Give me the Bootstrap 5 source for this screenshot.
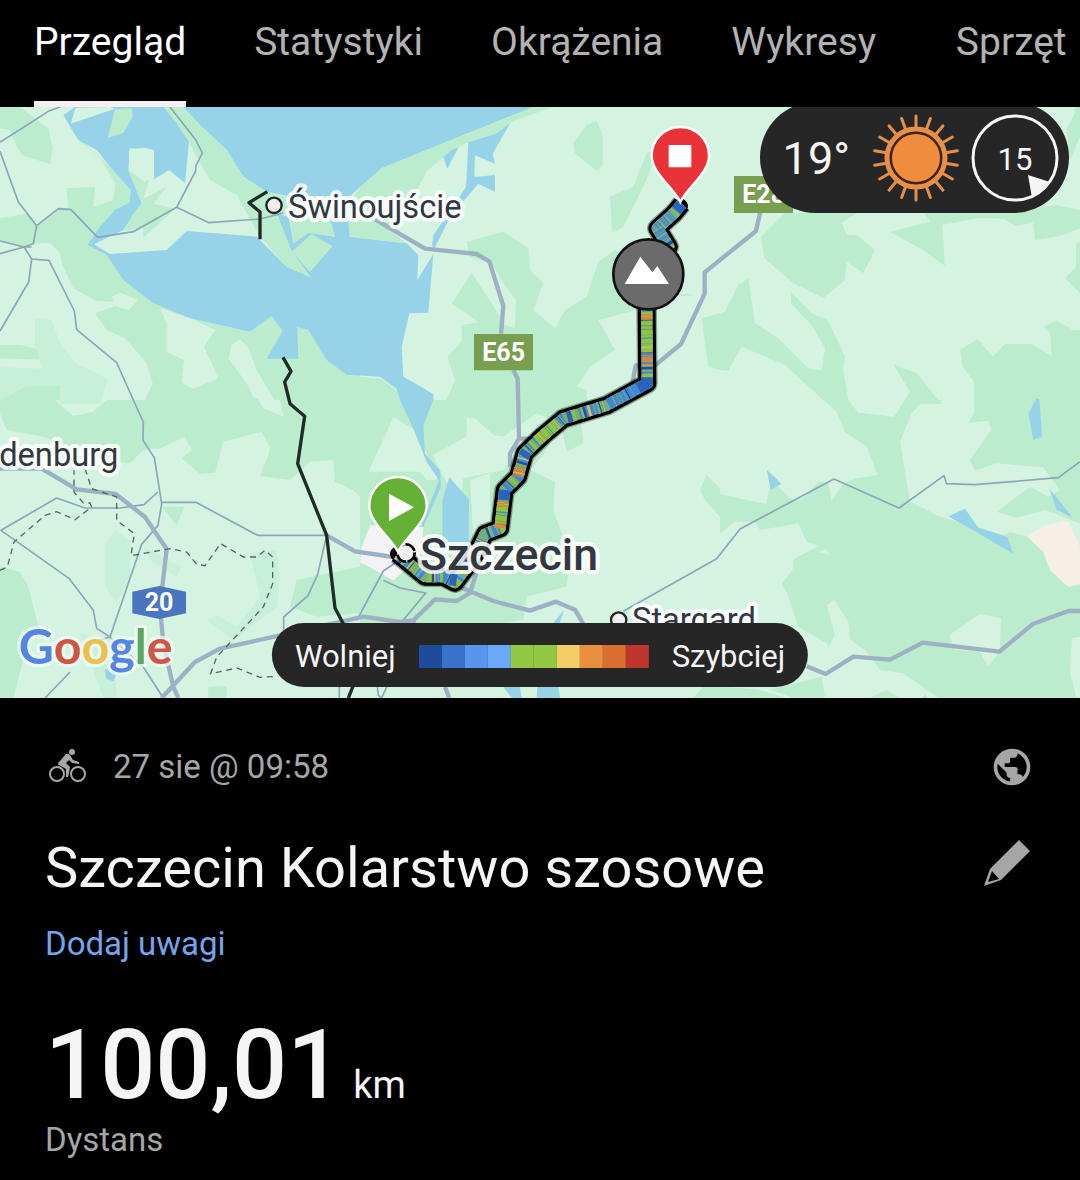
<!DOCTYPE html>
<html lang="pl">
<head>
<meta charset="utf-8">
<meta name="viewport" content="width=device-width, initial-scale=1">
<title>Szczecin Kolarstwo szosowe</title>
<link href="https://cdn.jsdelivr.net/npm/bootstrap@5.3.0/dist/css/bootstrap.min.css" rel="stylesheet">
<style>
  body { background: #000; color: #f5f5f5; font-family: Roboto, "Noto Sans", sans-serif; overflow-x: hidden; }
  .tabs-bar { overflow-x: auto; scrollbar-width: none; height: 107px; }
  .tabs-bar::-webkit-scrollbar { display: none; }
  .tab-item { padding: 0 34px; min-width: 202px; }
  .tab-item .nav-link { padding: 18px 0 0; height: 107px; color: #b2b2b2; font-size: 39px; line-height: 48px; white-space: nowrap; text-align: center; border-bottom: 6px solid transparent; }
  .tab-item .nav-link.active { color: #fff; border-bottom-color: #f5eff3; }
  .map-area { aspect-ratio: 1080 / 591; background: #d5f3e1; }
  .map-area > svg { width: 100%; height: 100%; }
  .map-area text { font-family: Roboto, "Noto Sans", sans-serif; }
  .map-area .provider { font-family: Lato, sans-serif; font-size: 145px; font-weight: 700; paint-order: stroke; }
  .town { fill: #33373f; stroke: #fff; stroke-opacity: .85; stroke-width: 24px; stroke-linejoin: round; paint-order: stroke; }
  .shield { fill: #fff; font-weight: 700; text-anchor: middle; font-size: 75px; }
  .weather { top: -5px; right: 11px; height: 111px; background: #262626; padding: 2px 10px 0 23px; }
  .temp { font-size: 45px; line-height: 54px; margin-right: 21px; }
  .wind { margin-left: 10px; }
  .speed-key { bottom: 11px; left: 50%; transform: translateX(-50%); height: 64px; padding: 3px 23px 0; gap: 23px; background: #262626; font-size: 31px; line-height: 36px; }
  .swatch { width: 23px; height: 23px; }
  .details { padding: 45px 46px 0 45px; }
  .meta { color: #a6a6a6; font-size: 33px; line-height: 48px; }
  .title-row { margin-top: 43px; }
  .ride-title { font-size: 56px; line-height: 68px; font-weight: 400; }
  .note-link { color: #74a5ea; font-size: 33px; line-height: 44px; margin-top: 20px; }
  .distance { font-size: 97px; line-height: 102px; font-weight: 500; }
  .distance-row { gap: 11px; margin-top: 48px; }
  .unit { font-size: 38px; line-height: 44px; }
  .icon-btn { color: #a6a6a6; line-height: 0; }
  .edit-btn { margin-bottom: 8px; }
</style>
<script src="https://cdn.jsdelivr.net/npm/bootstrap@5.3.0/dist/js/bootstrap.bundle.min.js"></script>
</head>
<body>
<nav class="tabs-bar" aria-label="Aktywność">
  <ul class="nav flex-nowrap">
    <li class="nav-item tab-item flex-shrink-0"><a class="nav-link active" aria-current="page" href="#">Przegląd</a></li>
    <li class="nav-item tab-item flex-shrink-0"><a class="nav-link" href="#">Statystyki</a></li>
    <li class="nav-item tab-item flex-shrink-0"><a class="nav-link" href="#">Okrążenia</a></li>
    <li class="nav-item tab-item flex-shrink-0"><a class="nav-link" href="#">Wykresy</a></li>
    <li class="nav-item tab-item flex-shrink-0"><a class="nav-link" href="#">Sprzęt</a></li>
  </ul>
</nav>

<main>
<section class="map-area position-relative overflow-hidden">
<svg class="d-block" viewBox="0 0 3240 1773" preserveAspectRatio="xMidYMid slice" role="img" aria-label="Mapa trasy">
  <defs>
    <path id="track" d="M965-588L942-560L892-515L926-460L860-380V-260L862-50L740 16L610 56L550 106L494 160L474 230L434 270L420 385L375 402L340 475L285 548L250 530H195L135 480L112 462"/>
    <path id="pin" d="M0 0C-20-42-86-88-86-139A86 86 0 0 1 86-139C86-88 20-42 0 0Z"/>
  </defs>
  <rect width="3240" height="1773" fill="#d5f3e1"/>
  <!-- forests -->
  <g fill="#bbeccd">
    <g transform="translate(0 -21)">
      <path d="M0 21H60L145 85L158 145L150 193L65 165L40 118L30 90L0 85Z"/>
      <path d="M195 60L235 115L330 200L392 270L388 312L300 400L265 435L320 465L370 540L460 610L570 655L750 695L815 648L1080 640V900H435L458 850L440 790L375 715L320 690L285 640L345 618L385 630L415 600L360 578L335 590L340 605L290 603L220 565L185 490L180 460L150 428L110 430L72 442L0 425V355L85 340L110 375L175 325L205 325L200 265L285 260L280 322L340 300L345 250L300 175L235 120Z"/>
      <path d="M0 735L60 735L150 757V780L0 775ZM0 870L80 858L180 855V900H0Z"/>
    </g>
    <g transform="translate(1080 -21)">
      <path d="M680 75L710 62L728 105V195L710 213L645 160L640 130ZM750 290L820 260L860 160L880 150L870 215L830 300L790 380L757 398Z"/>
      <path d="M320 425L430 395L505 445L510 510L550 550L520 630L585 685L615 630L680 590L715 485L765 450L940 580L1005 586L940 590L830 630L715 660L765 750L690 800L650 860L680 870V930L600 960L560 1050L400 1250L200 1250L260 900L285 840L262 770L305 725V675L355 668L320 640L275 612L335 518L395 610L435 675L465 685L468 600L430 550L395 490L330 470Z"/>
      <path d="M1025 655L1080 640V810L1045 800Z"/>
      <path d="M0 830L60 835L110 870L220 900V1250H0Z"/>
    </g>
    <g transform="translate(2160 -21)">
      <path d="M195 338H610L630 365L510 396L610 450L675 498L667 375L780 353L850 356L890 378L940 368L945 420L1020 408L1080 385V330L1010 315L860 338H412L365 368L380 405H410L465 450L430 520L380 485L375 540L310 594L220 550L133 475L123 410Z"/>
      <path d="M0 640L15 635L55 555L85 535L105 670L175 715L265 805L305 812L315 745L275 675L213 610V577L275 640L323 660L375 770L370 810L385 900L420 980H400L310 900L195 795L65 740L25 812L0 810Z"/>
      <path d="M520 793L590 820L655 900L555 900L570 875ZM720 750L773 717L818 770L855 732H935L995 768L990 700L970 680L1010 662L1060 690L1080 690V960H762V845L728 800ZM1035 535L1068 500V430L1080 425V580ZM1040 85L1065 40V21H1080V110L1050 180Z"/>
    </g>
    <g transform="translate(0 879)">
      <path d="M0 0H1080V290L1060 270L1005 245L1000 180L930 185L870 240L780 228L805 165L810 140L785 95L670 125L645 218L600 222L545 175L575 150L555 110L480 145L430 150L390 190L350 185L280 170L130 110L20 90L0 40Z"/>
      <path d="M0 500L60 515L85 560L100 620L115 680L70 780L40 893H0ZM485 320H553L530 375ZM625 860L680 858V893H625ZM890 540L1080 500V640L950 650L870 620Z"/>
    </g>
    <g transform="translate(1080 879)">
      <path d="M0 0H820L660 40L670 130L620 155L600 60L500 180L510 210L585 245L580 330L605 400L630 480L620 560L500 590L490 660L200 700H0Z"/>
      <path d="M1020 270L1040 225L1080 265V350L1035 300ZM1000 893L1030 860H1080V893Z"/>
    </g>
    <g transform="translate(2160 879)">
      <path d="M315 0L350 35L375 95L440 140L473 225L410 235L370 250L335 303L325 245L295 245L245 300L213 298L155 240L138 312L80 300L0 282V400L45 365L105 365L120 390L235 370L260 425L297 438L220 478L218 510L187 550L205 590L235 680L320 730L325 742L345 705L320 615L343 600L385 665L390 718L440 755L480 810L550 820L655 893H1080V500L1045 360L920 410L870 395L850 405L770 380L660 350L570 305L540 125L575 40L600 12H665L660 0H555L522 50L415 38L385 0Z"/>
      <path d="M765 0V35L745 68L805 62L813 90L750 180L765 212L830 190L970 202L1020 270L985 290L930 260L830 335L890 353L975 330L1080 370V0H950L930 45L900 48L845 35L820 0ZM150 870L305 830L315 893L220 893ZM450 893L500 870L540 893ZM0 860L110 868L200 893H0Z"/>
    </g>
  </g>
  <!-- clearings -->
  <g fill="#d5f3e1">
    <g transform="translate(0 -21)">
      <path d="M480 625L580 658L645 690L612 740L655 835L580 867L545 848L552 780L500 755V670ZM695 735L720 718L743 740L770 810L850 945L760 890L740 850L685 775Z"/>
      <path d="M590 170L630 240L710 285L740 340L780 385L790 412L560 393L500 450L330 462L280 435L400 395L530 325Z"/>
    </g>
    <g transform="translate(0 879)"><path d="M165 0H320L280 35L220 48ZM775 0H840L850 50L790 25Z"/></g>
    <g transform="translate(1080 879)">
      <path d="M25 215L100 52L165 90L205 170L240 215L230 240L200 240L180 215ZM320 55L345 55L400 105L430 110L530 40L590 65L470 165L430 210L310 235L300 330L245 220L218 165L320 110ZM330 240L390 220V370L340 420Z"/>
      <path d="M500 590L620 590L680 680H490Z"/>
    </g>
    <g transform="translate(2160 879)"><path d="M688 705L780 642L843 655L840 755L803 800L780 755L705 750ZM1055 715L1080 710V893H1070L1050 820ZM295 457L318 447L330 465Z"/></g>
  </g>
  <g fill="#c8f0d8">
    <path d="M105 635L155 638L180 710L230 770L325 815L300 890H180V835L80 838L20 870L0 880V780L125 785L105 710Z"/>
    <path d="M315 1310L345 1270L390 1300V1420L350 1485L315 1440ZM750 1340L830 1330L840 1420L830 1500L700 1600L620 1540L650 1525L710 1560L780 1470ZM430 1320L545 1380L530 1410L450 1360ZM240 1580L340 1590L350 1773H310Z"/>
  </g>
  <!-- water -->
  <g fill="#97d3e8">
    <path d="M190 24L225 0H495L530 49L567 104L555 229L508 189L462 217V129L390 124L385 189L425 289L370 369L282 412L330 441L500 429L560 372L770 389L860 479L930 509L875 434L830 319L866 329L880 409L925 377L1005 389L980 329L1045 339L1050 389L1220 409L1255 444L1252 519L1300 441L1285 617L1228 619L1205 719L1210 809L1245 829L1300 862V879L1270 955L1275 1040L1320 1090L1323 1140L1265 1270L1258 1270L1317 1120L1280 1065L1240 965L1200 879L1190 845L1140 809L1040 803L980 759L925 669L892 660L895 755H800L848 672L815 627L750 674L570 634L460 589L370 519L320 444L262 414L300 359L345 309L388 287L392 249L330 179L290 129L235 99Z"/>
    <path d="M550 0H1600L1490 44L1330 109L1145 184L1080 241L1050 268H865L800 254L730 209L680 129L600 54Z"/>
    <path d="M1538 36L1478 140L1485 170L1425 145L1423 210L1485 204V255L1435 230L1350 330L1303 425L1296 415L1300 385L1398 240L1405 105L1490 79V45ZM1325 136L1376 120L1342 185ZM1327 1180L1348 1110L1407 1178V1330H1327ZM1662 1545L1692 1510L1675 1560H1660ZM1510 1740H1560L1565 1773H1535ZM1612 1740H1675L1680 1773H1610Z"/>
    <path d="M3085 920L3108 875L3118 875L3126 990L3100 998ZM2300 1088L2345 1130L2312 1149ZM2845 1228L2895 1205L2935 1262L3022 1290L3040 1340L2930 1276ZM3148 1145L3185 1190L3217 1232L3170 1208ZM315 1685L350 1700L340 1723L318 1715ZM2770 1773L2776 1760V1773Z"/>
  </g>
  <g fill="#bbeccd">
    <path d="M345 7L395 4L398 30L370 78L323 93ZM875 434L935 382L998 417L930 495Z"/>
    <path d="M490 0H550L600 54L680 129L730 209L800 254L860 270L866 320L830 319L875 434L930 509L860 479L780 389L740 319L710 264L630 219L590 149L567 104L530 49Z"/>
    <path d="M870 270H1060L1080 241L1145 184L1330 109L1490 44L1600 0H1660L1540 41L1490 79L1405 105L1355 129L1280 194L1240 269L1180 379L1220 409L1080 394L1050 389L1045 339L990 335L1005 389L925 377L880 409L866 329Z"/>
    <path d="M387 190L435 225L448 215L430 275L500 240L460 290L525 305L430 392V362L372 372L400 320L425 289Z"/>
  </g>
  <path fill="#d5f3e1" d="M227 2L330 0L345 5L212 50ZM388 128L430 122L460 128L445 220L387 188Z"/>
  <path fill="#f5efe5" d="M3080 1288L3130 1257L3205 1240L3240 1320V1432L3205 1440L3150 1390L3130 1335Z"/>
  <path fill="#f3f3f5" d="M1110 1255L1270 1260L1260 1350L1180 1420L1080 1365L1085 1320Z"/>
  <!-- secondary roads -->
  <g fill="none" stroke="#8ba6b8" stroke-width="5" stroke-linejoin="round">
    <path d="M0 106L145 13L180 0M0 133L55 285L110 356L175 305L213 308L293 391L400 374L530 301L627 347L780 336L850 318M510 0L587 98L607 138L587 178V192L530 301M110 356L100 410L72 420L95 456L147 460L223 612L230 668L350 767L400 879L430 945L429 1000L463 1052L485 1190L474 1255L425 1312L330 1590L280 1605M95 456L86 525L0 672M0 402L72 420L0 440M72 420H95"/>
    <path d="M485 1186H588L773 1285H980L953 1402L924 1466L851 1530V1600M474 1155L432 1193L360 1203H255L170 1173L3 1270L208 1415L280 1510L290 1564L330 1590L430 1680L486 1767M210 1695L135 1773"/>
    <path d="M1190 1365L1150 1392L1070 1540M1150 1420L1200 1443L1277 1458L1205 1545M1132 1740L1135 1765L1145 1773L1160 1740M1870 1513L2150 1355L2220 1266L2502 1116L2697 1203L2832 1106L2840 1130L2925 1133L3175 1112L3240 1064M1018 1740V1773"/>
  </g>
  <!-- main roads -->
  <g fill="none" stroke="#9db1c5" stroke-width="13" stroke-linejoin="round">
    <path d="M0 1085H125L230 1147L347 1161L435 1230L500 1326L480 1500L490 1610L520 1740L535 1773M485 1773L585 1665L660 1625L840 1585L1090 1529L1200 1545L1240 1540L1305 1477L1370 1482L1410 1458L1430 1395M980 1285L1065 1333L1180 1350M1380 1440L1480 1482L1590 1511L1668 1484L1725 1508L1755 1560M1240 1540L1260 1600M1335 1740L1348 1773"/>
    <path d="M1125 337L1275 425L1430 441L1468 463L1510 597L1503 680M1540 790L1553 815L1557 995L1530 1040V1080M1560 995H1600M1895 840L1907 775H1965L2043 711L2114 560V496L2268 372L2282 310"/>
    <path d="M2420 1678L2477 1701L2560 1649L2670 1658L2768 1607L2998 1634L3100 1550L3205 1512H3240"/>
  </g>
  <g fill="none" stroke="#53685c" stroke-width="4" stroke-dasharray="18 14">
    <path d="M0 1390L22 1380L42 1305L135 1225L170 1214L225 1238L275 1200L270 1188H250L222 1155V1090M255 1085L275 1145L350 1170V1240L403 1280L393 1346L510 1325L560 1335L590 1372L615 1376L662 1310L730 1350H770L795 1330L818 1350V1430L790 1500L650 1650L632 1700L710 1683L780 1711L830 1708"/>
  </g>
  <g fill="none" stroke="#202b28" stroke-width="10" stroke-linejoin="round">
    <path d="M802 254L747 287L780 315V397M849 751L873 793L854 825L870 890L914 928L893 1070L980 1285L1005 1503L1040 1570M1062 1730L1045 1773"/>
  </g>
  <!-- recorded track, coloured by speed -->
  <g transform="translate(1080 879)" fill="none" stroke-linejoin="round">
    <use href="#track" stroke="#000" stroke-opacity=".35" stroke-width="62"/>
    <use href="#track" stroke="#000" stroke-width="54"/>
    <path stroke="#000" stroke-width="44" stroke-linecap="round" d="M962-582L950-566M135 480L112 462"/>
    <use href="#track" stroke="#7fae5c" stroke-width="34"/>
    <use href="#track" stroke="#4186d8" stroke-width="34" stroke-dasharray="14 5 30 9 6 11 22 17 5 8"/>
    <use href="#track" stroke="#8fc33f" stroke-width="34" stroke-dasharray="5 23 14 41 9 17 24 33 4 12"/>
    <use href="#track" stroke="#66aeb0" stroke-width="34" stroke-dasharray="3 31 5 19 7 47 3 26"/>
    <use href="#track" stroke="#e3bf55" stroke-width="34" stroke-dasharray="4 57 5 83 3 39 8 101"/>
    <use href="#track" stroke="#1f4f9f" stroke-width="34" stroke-dasharray="4 43 7 71 3 29 9 87"/>
    <path stroke="#5c9bb0" stroke-width="34" d="M940-558L892-515L918-473"/>
    <path stroke="#4186d8" stroke-width="34" stroke-dasharray="5 7 3 9" d="M940-558L892-515L918-473"/>
    <path stroke="#8fc33f" stroke-width="34" stroke-dasharray="3 19" d="M940-558L892-515L918-473"/>
    <path stroke="#2a63bb" stroke-width="34" d="M965-588L950-570M862-68V-50L835-35M636 48L622 52M500 154L490 170M434 270L431 300M290 541L270 539"/>
    <path stroke="#4186d8" stroke-width="34" stroke-dasharray="11 4 5 3" d="M835-35L745 13"/>
    <path stroke="#90c43e" stroke-width="34" stroke-dasharray="14 4 6 3" d="M860-265L861-140M530 123L590 72M427 321L420 380"/>
    <path stroke="#ee7b36" stroke-width="34" stroke-dasharray="4 4 7 3" d="M860-257V-242M862-135V-105M479 203L474 230M427 308V321M421 370V384"/>
  </g>
  <!-- road numbers -->
  <path fill="#789e50" d="M1422 681H1599V790H1422ZM2202 207H2379V318H2202Z"/>
  <text class="shield" x="1511" y="762">E65</text>
  <text class="shield" x="2291" y="287">E28</text>
  <path fill="#4a76c0" d="M397 1454L478 1437L558 1454V1519L478 1536L397 1519Z"/>
  <text class="shield" x="477" y="1512">20</text>
  <!-- towns -->
  <g fill="#eee" stroke="#222" stroke-width="7">
    <circle cx="822" cy="295" r="23"/>
    <circle cx="1856" cy="1539" r="23"/>
    <circle cx="1218" cy="1338" r="26" stroke="#000" stroke-width="8" stroke-dasharray="36 4"/>
  </g>
  <text class="town" x="864" y="332" font-size="98">Świnoujście</text>
  <text class="town" x="355" y="1076" font-size="98" text-anchor="end">denburg</text>
  <text class="town" x="1896" y="1573" font-size="98">Stargard</text>
  <text class="town" x="1260" y="1388" font-size="134" font-weight="500">Szczecin</text>
  <g stroke="#fff" stroke-width="7">
    <use href="#pin" fill="#65b136" x="1194" y="1335"/>
    <use href="#pin" fill="#e93338" x="2041" y="285"/>
  </g>
  <path fill="#fff" d="M1167 1160L1242 1201L1167 1242ZM2006 114H2074V181H2006Z"/>
  <circle cx="1945" cy="502" r="105" fill="#6b6b6b" stroke="#111" stroke-width="8"/>
  <path fill="#fff" d="M1874 531L1921 449L1957 496L1972 477L2007 531Z"/>
  <!-- map provider -->
  <text class="provider" x="56" y="1672" stroke="#f2fbf6" stroke-opacity=".7" stroke-width="20" stroke-linejoin="round"><tspan fill="#5585e3">G</tspan><tspan fill="#cf5547">o</tspan><tspan fill="#eac04e">o</tspan><tspan fill="#5585e3">g</tspan><tspan fill="#5ba661">l</tspan><tspan fill="#cf5547">e</tspan></text>
</svg>

<div class="weather position-absolute rounded-pill d-flex align-items-center">
  <span class="temp">19°</span>
  <svg width="90" height="92" viewBox="-45 -45 90 92" aria-hidden="true">
    <g id="rays" stroke="#e58f48" stroke-width="3" stroke-linecap="round"></g>
    <circle r="29" fill="#3d2409" stroke="#e58f48" stroke-width="5"/>
    <circle r="24" fill="#f08c3e"/>
  </svg>
  <svg class="wind" width="88" height="90" viewBox="-44 -44 88 90" role="img" aria-label="Wiatr 15">
    <circle r="42" fill="none" stroke="#f5f5f5" stroke-width="3"/>
    <path fill="#f5f5f5" d="M13 17L35 24Q29 34 17 40Z"/>
    <text x="0" y="12" font-size="31" text-anchor="middle" fill="#f5f5f5">15</text>
  </svg>
</div>

<div class="speed-key position-absolute rounded-pill d-flex align-items-center">
  <span>Wolniej</span>
  <div class="d-flex" id="scale"></div>
  <span>Szybciej</span>
</div>
</section>

<section class="details">
  <div class="meta d-flex align-items-center justify-content-between">
    <div class="d-flex align-items-center">
      <svg class="me-4" width="44" height="44" viewBox="0 0 44 44" aria-hidden="true">
        <g fill="none" stroke="currentColor" stroke-width="2"><circle cx="12" cy="29" r="7"/><circle cx="33" cy="29" r="7"/></g>
        <circle cx="27" cy="7" r="3" fill="currentColor"/>
        <path fill="currentColor" d="M14 17L21 9Q23 8 25 10L28 15L34 17V19L27 18L24 15L21 18L25 22Q24 29 23 32H21V24L14 20Q12 19 14 17Z"/>
      </svg>
      <span>27 sie @ 09:58</span>
    </div>
    <button class="btn p-0 border-0 icon-btn" type="button" aria-label="Widoczność">
      <svg width="44" height="44" viewBox="0 0 24 24" fill="currentColor"><path d="M12 2C6.480 2 2 6.480 2 12s4.480 10 10 10 10-4.480 10-10S17.520 2 12 2Zm-1 17.930C7.050 19.440 4 16.080 4 12c0-.620.080-1.210.210-1.790L9 15v1c0 1.100.900 2 2 2v1.930Zm6.900-2.540c-.260-.810-1-1.390-1.900-1.390h-1v-3c0-.550-.450-1-1-1H8v-2h2c.550 0 1-.450 1-1V7h2c1.100 0 2-.900 2-2v-.410c2.930 1.190 5 4.060 5 7.410 0 2.080-.800 3.970-2.100 5.390Z"/></svg>
    </button>
  </div>
  <div class="title-row d-flex align-items-center justify-content-between">
    <h1 class="ride-title mb-0">Szczecin Kolarstwo szosowe</h1>
    <button class="btn p-0 border-0 icon-btn edit-btn" type="button" aria-label="Edytuj">
      <svg width="52" height="48" viewBox="0 0 52 48"><path fill="currentColor" fill-rule="evenodd" d="M37 0L48 11L19 40L2 46L8 29ZM10 31L6 42L17 39Z"/></svg>
    </button>
  </div>
  <a class="note-link d-inline-block text-decoration-none" href="#">Dodaj uwagi</a>
  <div class="distance-row d-flex align-items-baseline">
    <span class="distance">100,01</span><span class="unit">km</span>
  </div>
  <div class="meta">Dystans</div>
</section>
</main>
<script>
  const colors = ['#1e4b9b', '#3972cb', '#5795ee', '#6aa8fa', '#93c843', '#93c843', '#f3ce65', '#e98f42', '#d96e2f', '#bf352d'];
  document.getElementById('scale').innerHTML = colors.map(c => `<span class="swatch" style="background:${c}"></span>`).join('');
  document.getElementById('rays').innerHTML = Array.from({ length: 18 }, (_, i) => `<path d="M0-30V-42" transform="rotate(${i * 20})"/>`).join('');
</script>
</body>
</html>
